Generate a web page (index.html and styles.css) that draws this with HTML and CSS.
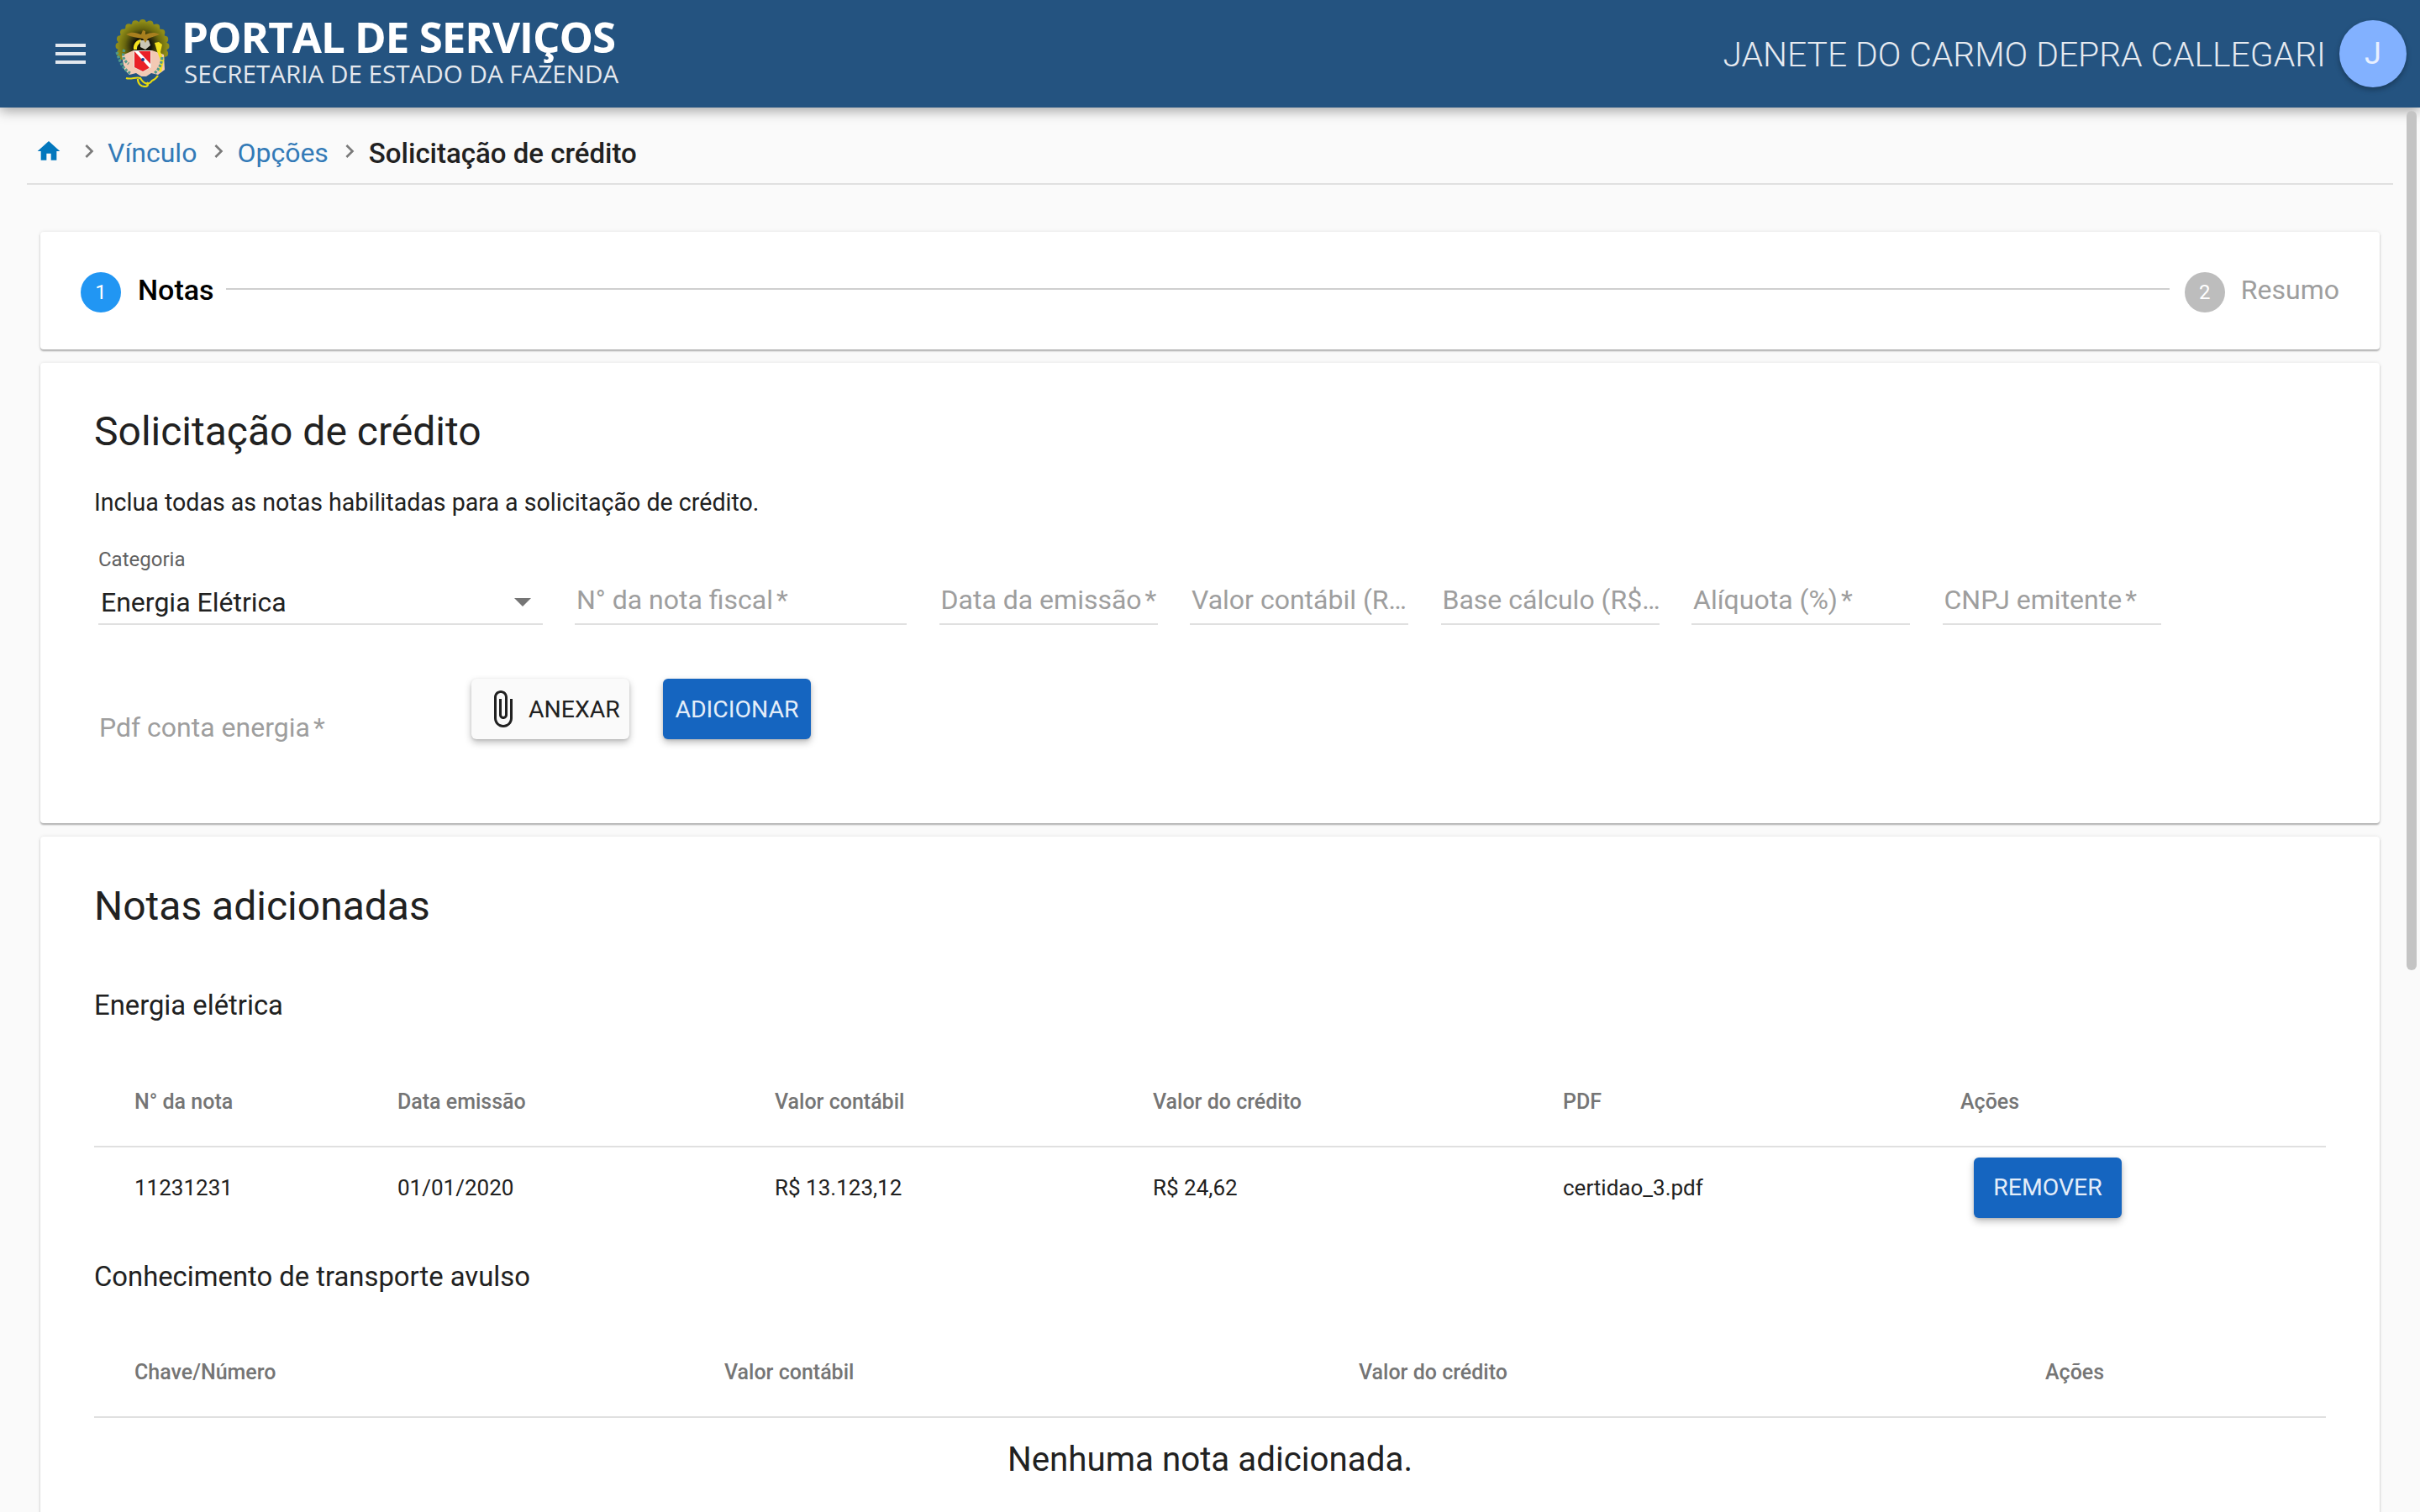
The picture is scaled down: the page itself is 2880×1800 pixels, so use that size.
FILE: index.html

```html
<!DOCTYPE html>
<html lang="pt-BR">
<head>
  <meta charset="UTF-8" />
  <title>Portal de Serviços</title>
  <link rel="stylesheet" href="styles.css">
</head>
<body>
  <header class="topbar">
    <svg class="menu-icon" viewBox="0 0 24 24"><path d="M3 18h18v-2H3v2zm0-5h18v-2H3v2zm0-7v2h18V6H3z"/></svg>
    <svg class="brasao" viewBox="17 13 65 81">
      <defs>
        <radialGradient id="sun" cx="50%" cy="50%" r="50%">
          <stop offset="0.35" stop-color="#15140a"/>
          <stop offset="0.72" stop-color="#6a680e"/>
          <stop offset="1" stop-color="#8f8c18"/>
        </radialGradient>
        <clipPath id="top-half"><rect x="10" y="5" width="80" height="56"/></clipPath>
      </defs>
      <g clip-path="url(#top-half)">
        <circle cx="49.5" cy="45" r="28" fill="none" stroke="#8f8c18" stroke-width="8" stroke-linecap="round" stroke-dasharray="0 8.8"/>
        <circle cx="49.5" cy="45" r="29.5" fill="url(#sun)"/>
      </g>
      <path fill="#f2c9b4" d="M25 56l14-6h22l14 5 1 18-8 6-8-2-6 4h-6l-6-4-8 2-6-6z"/>
      <path fill="#f5e21f" d="M39 49c-1-7 4-12 9-12l-2 5c-3 2-3 5-3 7zM64 41l5-1 4 3-2 9 4 10-3 14-3-1 2-13-4-11z"/>
      <path fill="#c9c6b6" d="M47 38l10 0 2 6-6 5-6-3z"/>
      <path fill="#a87f1e" d="M30 31c7-4 12-2 18 0l2-5 3 1 0 4c6-2 11-3 17 0-4 2-10 3-14 5l-3 5-3-5c-6-1-14-2-20-5z"/>
      <path fill="none" stroke="#4f9a8a" stroke-width="3.2" stroke-dasharray="3 1.6" d="M19 52c3 10 7 20 16 25M28 49c-3 7-1 13 5 17M73 58c-1 8-3 14-9 19"/>
      <path fill="none" stroke="#e8da10" stroke-width="2.2" d="M30 83c6 2 12-2 17 0 4 7 10 9 14 3 3-1 5-3 7-6M44 84c0 6 4 9 9 9 3 0 4-3 2-5"/>
      <path fill="#e8e4de" d="M39 50h21v20l-10 6-11-6z"/>
      <path fill="#ea2027" d="M40 51h19v19l-9 5-10-5z"/>
      <path fill="#fff" d="M40 51h5l14 15v5l-1 0z"/>
      <circle cx="50" cy="61" r="2" fill="#1a3a8a"/>
    </svg>
    <div class="brand">
      <div class="brand-title">PORTAL DE SERVIÇOS</div>
      <div class="brand-sub">SECRETARIA DE ESTADO DA FAZENDA</div>
    </div>
    <div class="user-name">JANETE DO CARMO DEPRA CALLEGARI</div>
    <div class="avatar">J</div>
  </header>

  <div class="scrollbar"></div>

  <nav class="crumbs">
    <svg class="home-icon" viewBox="0 0 24 24"><path d="M10 20v-6h4v6h5v-8h3L12 3 2 12h3v8z"/></svg>
    <svg class="chev first" viewBox="0 0 24 24"><path d="M10 6L8.59 7.41 13.17 12l-4.58 4.59L10 18l6-6z"/></svg>
    <a>Vínculo</a>
    <svg class="chev" viewBox="0 0 24 24"><path d="M10 6L8.59 7.41 13.17 12l-4.58 4.59L10 18l6-6z"/></svg>
    <a>Opções</a>
    <svg class="chev" viewBox="0 0 24 24"><path d="M10 6L8.59 7.41 13.17 12l-4.58 4.59L10 18l6-6z"/></svg>
    <span class="current">Solicitação de crédito</span>
  </nav>

  <main class="content">
    <section class="card stepper">
      <span class="step-dot active">1</span>
      <span class="step-label active">Notas</span>
      <span class="step-line"></span>
      <span class="step-dot">2</span>
      <span class="step-label">Resumo</span>
    </section>

    <section class="card form-card">
      <h2>Solicitação de crédito</h2>
      <p class="intro">Inclua todas as notas habilitadas para a solicitação de crédito.</p>
      <div class="fields">
        <div class="field select-field">
          <label>Categoria</label>
          <div class="select-value">Energia Elétrica<span class="caret"></span></div>
        </div>
        <div class="field w-nota"><span class="ph">N° da nota fiscal<i>*</i></span></div>
        <div class="field"><span class="ph">Data da emissão<i>*</i></span></div>
        <div class="field"><span class="ph">Valor contábil (R…</span></div>
        <div class="field"><span class="ph">Base cálculo (R$…</span></div>
        <div class="field"><span class="ph">Alíquota (%)<i>*</i></span></div>
        <div class="field"><span class="ph">CNPJ emitente<i>*</i></span></div>
      </div>
      <div class="attach-row">
        <span class="ph pdf">Pdf conta energia<i>*</i></span>
        <button class="btn light">
          <svg class="clip" viewBox="0 0 24 24"><path d="M16.5 6v11.5c0 2.21-1.79 4-4 4s-4-1.79-4-4V5c0-1.38 1.12-2.5 2.5-2.5s2.5 1.12 2.5 2.5v10.5c0 .55-.45 1-1 1s-1-.45-1-1V6H10v9.5c0 1.38 1.12 2.5 2.5 2.5s2.5-1.12 2.5-2.5V5c0-2.21-1.79-4-4-4S7 2.79 7 5v12.5c0 3.04 2.46 5.5 5.5 5.5s5.5-2.46 5.5-5.5V6h-1.5z"/></svg>
          ANEXAR
        </button>
        <button class="btn primary">ADICIONAR</button>
      </div>
    </section>

    <section class="card list-card">
      <h2>Notas adicionadas</h2>
      <h3>Energia elétrica</h3>
      <table>
        <colgroup>
          <col class="c313"><col class="c449"><col class="c450"><col class="c488"><col class="c473"><col>
        </colgroup>
        <thead>
          <tr><th>N° da nota</th><th>Data emissão</th><th>Valor contábil</th><th>Valor do crédito</th><th>PDF</th><th>Ações</th></tr>
        </thead>
        <tbody>
          <tr>
            <td>11231231</td><td>01/01/2020</td><td>R$ 13.123,12</td><td>R$ 24,62</td><td>certidao_3.pdf</td>
            <td><button class="btn primary remove">REMOVER</button></td>
          </tr>
        </tbody>
      </table>
      <h3 class="second">Conhecimento de transporte avulso</h3>
      <table class="second-table">
        <colgroup>
          <col class="c702"><col class="c755"><col class="c817"><col>
        </colgroup>
        <thead>
          <tr><th>Chave/Número</th><th>Valor contábil</th><th>Valor do crédito</th><th>Ações</th></tr>
        </thead>
      </table>
      <p class="empty">Nenhuma nota adicionada.</p>
    </section>
  </main>
</body>
</html>
```

FILE: styles.css

```css
* {
  box-sizing: border-box;
}
html, body {
  height: 1800px;
  overflow: hidden;
}
body {
  margin: 0;
  font-family: Roboto, sans-serif;
  background-color: #fafafa;
  color: #212121;
}

/* top bar */
.topbar {
  display: flex;
  align-items: center;
  height: 128px;
  padding: 0 16px 0 60px;
  background-color: #245380;
  color: #fff;
  box-shadow: 0 4px 14px rgba(0,0,0,0.35);
  position: relative;
}
.menu-icon {
  width: 48px;
  height: 48px;
  fill: #e3e8ef;
}
.brasao {
  width: 65px;
  height: 81px;
  margin-left: 29px;
  margin-top: -1px;
}
.brand {
  margin-left: 14px;
  margin-top: -11px;
  font-family: "Open Sans", sans-serif;
  white-space: nowrap;
}
.brand-title {
  font-size: 51px;
  font-weight: 700;
  letter-spacing: -1px;
  line-height: 58px;
}
.brand-sub {
  font-size: 29.6px;
  line-height: 32px;
  margin-left: 3px;
  color: #e4e8ee;
}
.user-name {
  margin-left: auto;
  margin-top: 2px;
  font-size: 40.8px;
  font-weight: 300;
  color: #e6eaf0;
}
.avatar {
  width: 80px;
  height: 80px;
  margin-left: 16px;
  border-radius: 50%;
  background-color: #82b1ff;
  color: #e8f0ff;
  font-size: 36px;
  display: flex;
  align-items: center;
  justify-content: center;
  box-shadow: 0 3px 6px rgba(0,0,0,0.3);
}
.scrollbar {
  position: absolute;
  top: 132px;
  left: 2864px;
  width: 12px;
  height: 1023px;
  border-radius: 6px;
  background-color: #c4c4c4;
}

/* breadcrumb */
.crumbs {
  display: flex;
  align-items: center;
  height: 92px;
  margin: 0 32px;
  width: 2816px;
  padding-top: 18px;
  border-bottom: 2px solid #e0e0e0;
  font-size: 32px;
}
.crumbs a {
  color: #337ab7;
}
.crumbs .current {
  font-weight: 500;
  color: #212121;
  font-size: 33px;
}
.home-icon {
  width: 32px;
  height: 32px;
  margin-left: 10px;
  margin-top: -5px;
  fill: #0277bd;
}
.chev {
  width: 32px;
  height: 32px;
  margin: -5px 6.5px 0 9.5px;
  fill: #7a7a7a;
}
.chev.first {
  margin-left: 16px;
  margin-right: 6px;
}

/* cards */
.content {
  padding: 56px 48px 0;
  width: 2880px;
}
.card {
  width: 2784px;
  background-color: #fff;
  border-radius: 4px;
  margin-bottom: 16px;
  box-shadow: 0 2px 2px rgba(0,0,0,0.28), 0 0 4px rgba(0,0,0,0.1);
}
.stepper {
  display: flex;
  align-items: center;
  height: 140px;
  padding: 0 48px;
}
.step-dot {
  width: 48px;
  height: 48px;
  flex: none;
  margin-top: 4px;
  border-radius: 50%;
  background-color: #bdbdbd;
  color: #fff;
  font-size: 24px;
  display: flex;
  align-items: center;
  justify-content: center;
}
.step-dot.active {
  background-color: #2196f3;
}
.step-label {
  margin-left: 19px;
  margin-top: -2px;
  font-size: 32px;
  color: #9e9e9e;
}
.step-label.active {
  margin-left: 20px;
  font-size: 34px;
  font-weight: 500;
  color: #000;
}
.step-line {
  flex: 1;
  height: 2px;
  margin: -4px 18px 0 14px;
  background-color: #cfcfcf;
}
.form-card {
  height: 548px;
  padding: 54px 64px 0;
}
h2 {
  margin: 0;
  font-size: 48px;
  font-weight: 400;
  line-height: 56px;
}
.intro {
  margin: 38px 0 0;
  font-size: 28.6px;
  line-height: 36px;
}
.fields {
  display: flex;
  align-items: flex-end;
  height: 88px;
  margin-top: 40px;
}
.field {
  width: 260px;
  margin-right: 38.5px;
  height: 58px;
  padding-top: 6px;
  border-bottom: 2px solid #e0e0e0;
  display: flex;
  align-items: flex-start;
  white-space: nowrap;
}
.w-nota {
  width: 395px;
}
.select-field {
  width: 529px;
  height: 88px;
  margin-left: 5px;
  margin-right: 38px;
  padding-top: 0;
  display: block;
}
.select-field label {
  display: block;
  font-size: 24px;
  line-height: 28px;
  margin-top: -4px;
  color: #616161;
}
.select-value {
  display: flex;
  align-items: center;
  margin-top: 15px;
  padding-left: 3px;
  font-size: 32px;
  line-height: 44px;
  color: #212121;
}
.caret {
  margin-left: auto;
  margin-right: 14px;
  border-left: 10px solid transparent;
  border-right: 10px solid transparent;
  border-top: 10px solid #757575;
}
.ph {
  font-size: 32px;
  line-height: 44px;
  padding-left: 2px;
  color: #9e9e9e;
}
.ph i {
  font-style: normal;
  margin-left: 4px;
}
.attach-row {
  display: flex;
  align-items: flex-start;
  margin-top: 64px;
}
.pdf {
  width: 449px;
  padding-left: 6px;
  margin-top: 36px;
}
.btn {
  height: 72px;
  border: none;
  border-radius: 6px;
  font-family: Roboto, sans-serif;
  font-size: 28.4px;
  display: flex;
  align-items: center;
  justify-content: center;
  box-shadow: 0 4px 8px rgba(0,0,0,0.25), 0 1px 3px rgba(0,0,0,0.12);
}
.btn.light {
  width: 188px;
  padding: 0 0 0 13px;
  justify-content: flex-start;
  background-color: #fafafa;
  color: #212121;
  gap: 7px;
}
.clip {
  width: 48px;
  height: 48px;
  fill: #212121;
}
.btn.primary {
  width: 176px;
  margin-left: 40px;
  padding: 0;
  background-color: #1565c0;
  color: #e3edf9;
}
.list-card {
  height: 900px;
  padding: 55px 64px 0;
}
h3 {
  margin: 69px 0 0;
  font-size: 32.8px;
  font-weight: 400;
  line-height: 42px;
}
h3.second {
  margin-top: 38px;
}
table {
  width: 100%;
  table-layout: fixed;
  border-collapse: collapse;
  margin-top: 41px;
}
.second-table {
  margin-top: 40px;
}
.c313 { width: 313px; }
.c449 { width: 449px; }
.c450 { width: 450px; }
.c488 { width: 488px; }
.c473 { width: 473px; }
.c702 { width: 702px; }
.c755 { width: 755px; }
.c817 { width: 817px; }
th {
  height: 106px;
  padding: 0 0 0 48px;
  text-align: left;
  font-size: 25px;
  font-weight: 500;
  color: #757575;
  border-bottom: 2px solid #e0e0e0;
}
td {
  height: 96px;
  padding: 0 0 0 48px;
  font-size: 26px;
  color: #212121;
}
.btn.remove {
  margin-left: 16px;
}
.empty {
  margin: 25px 0 0;
  text-align: center;
  font-size: 40.3px;
  line-height: 50px;
}
```
